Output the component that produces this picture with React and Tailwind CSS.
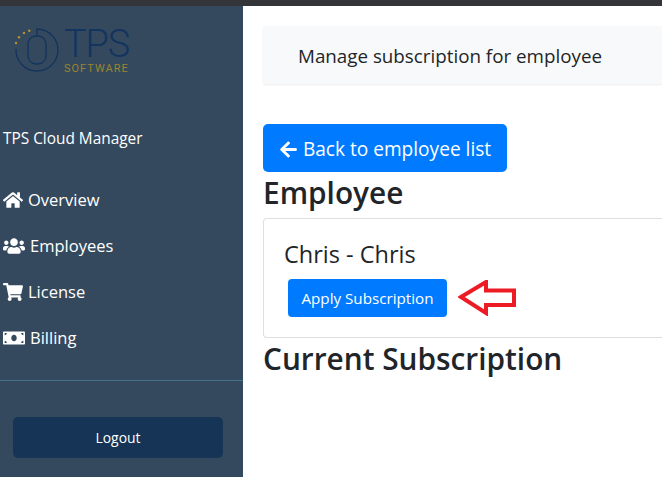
import { FaHome, FaUsers, FaShoppingCart, FaMoneyBill, FaArrowLeft } from 'react-icons/fa'

const LINKS = [
  { label: 'Overview', icon: FaHome, size: 20 },
  { label: 'Employees', icon: FaUsers, size: 22 },
  { label: 'License', icon: FaShoppingCart, size: 20 },
  { label: 'Billing', icon: FaMoneyBill, size: 22 },
]

function LogoMark() {
  return (
    <svg width="46" height="46" viewBox="0 0 46 46" fill="none" className="shrink-0">
      <path d="M23 9 V2 A21 21 0 1 1 2 22" stroke="#12345f" strokeWidth="1.3" />
      <rect x="14" y="9" width="18" height="28" rx="8" stroke="#12345f" strokeWidth="1.3" />
      <circle cx="2" cy="16" r="1.2" fill="#b8952a" />
      <circle cx="5" cy="10.3" r="1.2" fill="#b8952a" />
      <circle cx="10" cy="6" r="1.2" fill="#b8952a" />
      <circle cx="15.3" cy="3.7" r="1.2" fill="#b8952a" />
    </svg>
  )
}

export default function App() {
  return (
    <div className="h-[477px] w-[662px] overflow-hidden flex flex-col bg-white font-['Open_Sans','Noto_Sans',sans-serif]">
      <div className="h-[6px] shrink-0 bg-[#333538]" />
      <div className="flex flex-1 min-h-0">
        <aside className="w-[243px] shrink-0 bg-[#35495e] text-white flex flex-col">
          <div className="flex items-start gap-[4px] pl-[14px] pt-[21px] h-[119px]">
            <LogoMark />
            <div className="flex flex-col w-[66px]">
              <span className="text-[38px] leading-[34px] font-light tracking-[-1.2px] text-[#12345f] font-['Roboto',sans-serif]">TPS</span>
              <span className="text-[11px] leading-[14px] tracking-[1px] mt-[1px] text-[#9a8430] font-['Roboto',sans-serif] whitespace-nowrap">SOFTWARE</span>
            </div>
          </div>
          <div className="pl-[3px] text-[15.4px] leading-[28px] h-[52px]">TPS Cloud Manager</div>
          <nav className="flex flex-col">
            {LINKS.map(l => (
              <div key={l.label} className="flex items-center gap-[5px] h-[46px] pl-[3px] text-[16.5px]">
                <l.icon size={l.size} color="#fff" />
                <span>{l.label}</span>
              </div>
            ))}
          </nav>
          <div className="mt-[19px] border-t border-[#45708c] px-[13px] pt-[36px]">
            <button className="w-[210px] h-[41px] pt-[2px] rounded-[5px] bg-[#163556] text-[13.9px] text-white">Logout</button>
          </div>
        </aside>
        <main className="flex-1 min-w-0 pl-[20px] text-[#212529]">
          <div className="mt-[20px] h-[58px] pt-[2px] bg-[#f8f9fa] shadow-[0_1px_2px_rgba(0,0,0,0.08)] rounded-[3px] flex items-center pl-[35px] text-[18.8px] font-medium">
            Manage subscription for employee
          </div>
          <button className="mt-[40px] flex items-center gap-[5px] h-[48px] pt-[2px] w-[244px] justify-center rounded-[5px] bg-[#007bff] text-white text-[19.1px]">
            <FaArrowLeft size={19} />
            Back to employee list
          </button>
          <h2 className="text-[29.8px] leading-[42px] pb-[4px] font-semibold">Employee</h2>
          <div className="h-[120px] w-[420px] border border-[#dfdfdf] border-r-0 rounded-l-[4px] pl-[20px] pt-[18px]">
            <div className="text-[23.5px] leading-[34px] font-medium">Chris - Chris</div>
            <div className="mt-[8px] flex items-center gap-[11px] pl-[4px]">
              <button className="w-[159px] h-[38px] rounded-[4px] bg-[#007bff] text-white text-[15.2px]">Apply Subscription</button>
              <svg width="60" height="36" viewBox="0 0 60 36" fill="none">
                <path d="M3 17 L28 2 L28 10.5 L56 10.5 L56 25 L28 25 L28 33 Z" fill="#fff" stroke="#ed1c24" strokeWidth="4" strokeLinejoin="miter" />
              </svg>
            </div>
          </div>
          <h2 className="text-[29.8px] leading-[42px] font-semibold">Current Subscription</h2>
        </main>
      </div>
    </div>
  )
}
